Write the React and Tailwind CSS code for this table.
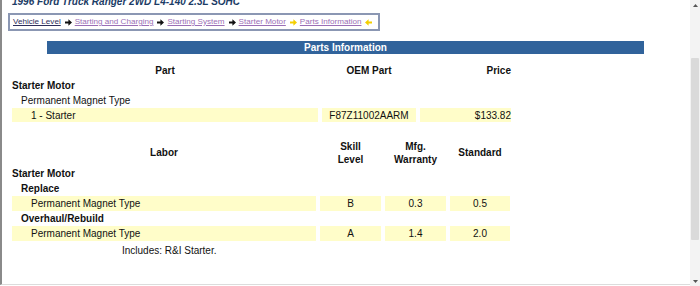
import React from 'react';

const font = { fontFamily: '"Liberation Sans", Arial, sans-serif' };

function Arrow({ color = '#111', dir = 'right' }) {
  return (
    <svg width="7" height="7" viewBox="0 0 7 7" className={`shrink-0 ${dir === 'left' ? 'rotate-180' : ''}`}>
      <path d="M0 2.6h3.4V0.3L7 3.5 3.4 6.7V4.4H0z" fill={color} />
    </svg>
  );
}

const crumbs = [
  { label: 'Vehicle Level', visited: true, arrow: '#111' },
  { label: 'Starting and Charging', arrow: '#111' },
  { label: 'Starting System', arrow: '#111' },
  { label: 'Starter Motor', arrow: '#f4cf00' },
  { label: 'Parts Information', arrow: '#f4cf00', left: true },
];

const labor = [
  { op: 'Replace', skill: 'B', warranty: '0.3', std: '0.5' },
  { op: 'Overhaul/Rebuild', skill: 'A', warranty: '1.4', std: '2.0' },
];

export default function App() {
  return (
    <div className="w-[700px] h-[286px] bg-white flex overflow-hidden text-[10px] text-[#111]" style={font}>
      {/* Main content */}
      <div className="flex-1 h-[285px] border-l-2 border-b border-l-[#8a8a8a] border-b-[#dcdcdc] overflow-hidden">
        <div className="mt-[-4px] ml-[10px] font-bold italic text-[#1c3c66] leading-[12px] whitespace-nowrap">
          1996 Ford Truck Ranger 2WD L4-140 2.3L SOHC
        </div>

        {/* Breadcrumb */}
        <div className="ml-[6px] mt-[5px] w-[372px] h-[18px] border-2 border-[#8b97b3] flex items-center gap-[3px] pl-[3px] text-[8.1px] whitespace-nowrap">
          {crumbs.map((c) => (
            <React.Fragment key={c.label}>
              <span className={`shrink-0 underline mr-[1px] ${c.visited ? 'text-[#2d2d5a]' : 'text-[#9b6fb6]'}`}>{c.label}</span>
              <Arrow color={c.arrow} dir={c.left ? 'left' : 'right'} />
            </React.Fragment>
          ))}
        </div>

        {/* Blue bar */}
        <div className="ml-[45px] mt-[10px] w-[597px] h-[13px] bg-[#31639b] text-white font-bold flex items-center justify-center leading-none">
          Parts Information
        </div>

        {/* Parts table */}
        <div className="ml-[10px] mt-[8px] w-[500px]">
          <div className="flex h-[16px] items-center font-bold gap-[4px]">
            <div className="w-[306px] text-center">Part</div>
            <div className="w-[94px] text-center">OEM Part</div>
            <div className="w-[91px] text-right">Price</div>
          </div>
          <div className="h-[15px] flex items-center font-bold">Starter Motor</div>
          <div className="h-[15px] flex items-center pl-[9px]">Permanent Magnet Type</div>
          <div className="flex h-[14px] gap-[4px]">
            <div className="w-[306px] bg-[#fffdc9] flex items-center pl-[19px]">1 - Starter</div>
            <div className="w-[94px] bg-[#fffdc9] flex items-center justify-center">F87Z11002AARM</div>
            <div className="w-[91px] bg-[#fffdc9] flex items-center justify-end">$133.82</div>
          </div>
        </div>

        {/* Labor table */}
        <div className="ml-[10px] mt-[17px] w-[500px]">
          <div className="flex h-[27px] items-center font-bold gap-[4px] leading-[13px]">
            <div className="w-[304px] text-center">Labor</div>
            <div className="w-[61px] text-center">Skill<br />Level</div>
            <div className="w-[61px] text-center">Mfg.<br />Warranty</div>
            <div className="w-[60px] text-center">Standard</div>
          </div>
          <div className="h-[15px] flex items-center font-bold">Starter Motor</div>
          {labor.map((l) => (
            <React.Fragment key={l.op}>
              <div className="h-[15px] flex items-center font-bold pl-[9px]">{l.op}</div>
              <div className="flex h-[15px] gap-[4px]">
                <div className="w-[304px] bg-[#fffdc9] flex items-center pl-[19px]">Permanent Magnet Type</div>
                <div className="w-[61px] bg-[#fffdc9] flex items-center justify-center">{l.skill}</div>
                <div className="w-[61px] bg-[#fffdc9] flex items-center justify-center">{l.warranty}</div>
                <div className="w-[60px] bg-[#fffdc9] flex items-center justify-center">{l.std}</div>
              </div>
            </React.Fragment>
          ))}
          <div className="h-[16px] flex items-center pl-[110px] mt-[1px]">Includes: R&amp;I Starter.</div>
        </div>
      </div>

      {/* Scrollbar */}
      <div className="w-[10px] h-[286px] bg-[#f3f3f3] flex flex-col items-center">
        <div className="h-[10px] flex items-center">
          <svg width="5" height="3" viewBox="0 0 5 3"><path d="M0 3L2.5 0 5 3z" fill="#555" /></svg>
        </div>
        <div className="mt-[48px] w-[8px] h-[182px] bg-[#dadada] rounded-[1px]" />
        <div className="flex-1" />
        <div className="h-[10px] flex items-center">
          <svg width="5" height="3" viewBox="0 0 5 3"><path d="M0 0h5L2.5 3z" fill="#555" /></svg>
        </div>
      </div>
    </div>
  );
}
